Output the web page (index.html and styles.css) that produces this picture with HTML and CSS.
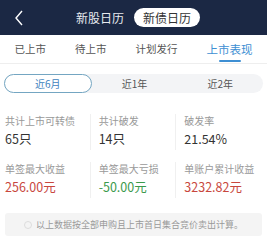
FILE: index.html
```html
<!DOCTYPE html>
<html>
<head>
    <title>新债日历</title>
    <link rel="stylesheet" href="styles.css">
</head>
<body>
    <div class="topbar">
        <span class="back">
            <svg width="10" height="16" viewBox="0 0 10 16"><path d="M8 1 L2 8 L8 15" fill="none" stroke="#fff" stroke-width="1.4"/></svg>
        </span>
        <div class="switch">
            <span class="switch-item">新股日历</span>
            <span class="switch-item active">新债日历</span>
        </div>
    </div>

    <div class="tabs">
        <span class="tab">已上市</span>
        <span class="tab">待上市</span>
        <span class="tab">计划发行</span>
        <span class="tab active">上市表现</span>
    </div>

    <div class="range">
        <span class="range-item active">近6月</span>
        <span class="range-item">近1年</span>
        <span class="range-item">近2年</span>
    </div>

    <div class="stats">
        <div class="stat">
            <div class="label">共计上市可转债</div>
            <div class="value">65只</div>
        </div>
        <div class="stat">
            <div class="label">共计破发</div>
            <div class="value">14只</div>
        </div>
        <div class="stat">
            <div class="label">破发率</div>
            <div class="value">21.54%</div>
        </div>
        <div class="stat">
            <div class="label">单签最大收益</div>
            <div class="value red">256.00元</div>
        </div>
        <div class="stat">
            <div class="label">单签最大亏损</div>
            <div class="value green">-50.00元</div>
        </div>
        <div class="stat">
            <div class="label">单账户累计收益</div>
            <div class="value red">3232.82元</div>
        </div>
    </div>

    <div class="note">
        <span class="note-icon"></span>
        <span>以上数据按全部申购且上市首日集合竞价卖出计算。</span>
    </div>
</body>
</html>
```

FILE: styles.css
```css
body {
    margin: 0;
    font-family: "Noto Sans CJK SC", "Noto Sans", sans-serif;
    background-color: white;
    width: 267px;
}

.topbar {
    height: 35px;
    background-color: #1b2844;
    display: flex;
    align-items: center;
}

.back {
    display: flex;
    margin-left: 14px;
}

.switch {
    display: flex;
    align-items: center;
    gap: 10px;
    margin-left: 52px;
}

.switch-item {
    color: #e8ebf0;
    font-size: 12px;
    line-height: 19px;
}

.switch-item.active {
    background-color: white;
    color: #333;
    border-radius: 10px;
    padding: 0 9px;
}

.tabs {
    display: flex;
    justify-content: space-around;
    align-items: center;
    height: 28px;
    border-bottom: 1px solid #eeeeee;
}

.tab {
    font-size: 10.5px;
    color: #555;
    position: relative;
    line-height: 28px;
}

.tab.active {
    color: #3e8fd3;
    font-size: 11.5px;
}

.tab.active::after {
    content: "";
    position: absolute;
    left: 12px;
    right: 12px;
    bottom: 1px;
    height: 2px;
    border-radius: 1px;
    background-color: #3e8fd3;
}

.range {
    display: flex;
    margin: 10px 4px 0 4px;
    background-color: #f3f4f6;
    border-radius: 10px;
    height: 19px;
}

.range-item {
    flex: 1;
    text-align: center;
    font-size: 10px;
    line-height: 19px;
    color: #555;
}

.range-item.active {
    border: 1px solid #74a6c2;
    border-radius: 10px;
    color: #3e83bd;
    background-color: white;
    line-height: 17px;
}

.stats {
    display: grid;
    grid-template-columns: 1fr 1fr 1fr;
    margin: 21px 5px 0 5px;
    row-gap: 12px;
}

.stat {
    border-right: 1px solid #f0f0f0;
    padding-left: 8px;
}

.stat:nth-child(3n+1) {
    padding-left: 0;
}

.stat:nth-child(3n) {
    border-right: none;
}

.label {
    font-size: 10px;
    color: #999;
    line-height: 14px;
    white-space: nowrap;
}

.value {
    font-size: 12.5px;
    color: #333;
    line-height: 22px;
}

.red {
    color: #c8473d;
}

.green {
    color: #3b9a4c;
}

.note {
    margin: 15px 5px 0 5px;
    height: 23px;
    background-color: #f4f4f4;
    border-radius: 3px;
    font-size: 9px;
    color: #999;
    display: flex;
    align-items: center;
    justify-content: center;
    gap: 4px;
}

.note-icon {
    width: 6px;
    height: 6px;
    border-radius: 50%;
    border: 1px solid #ddd;
}
```
